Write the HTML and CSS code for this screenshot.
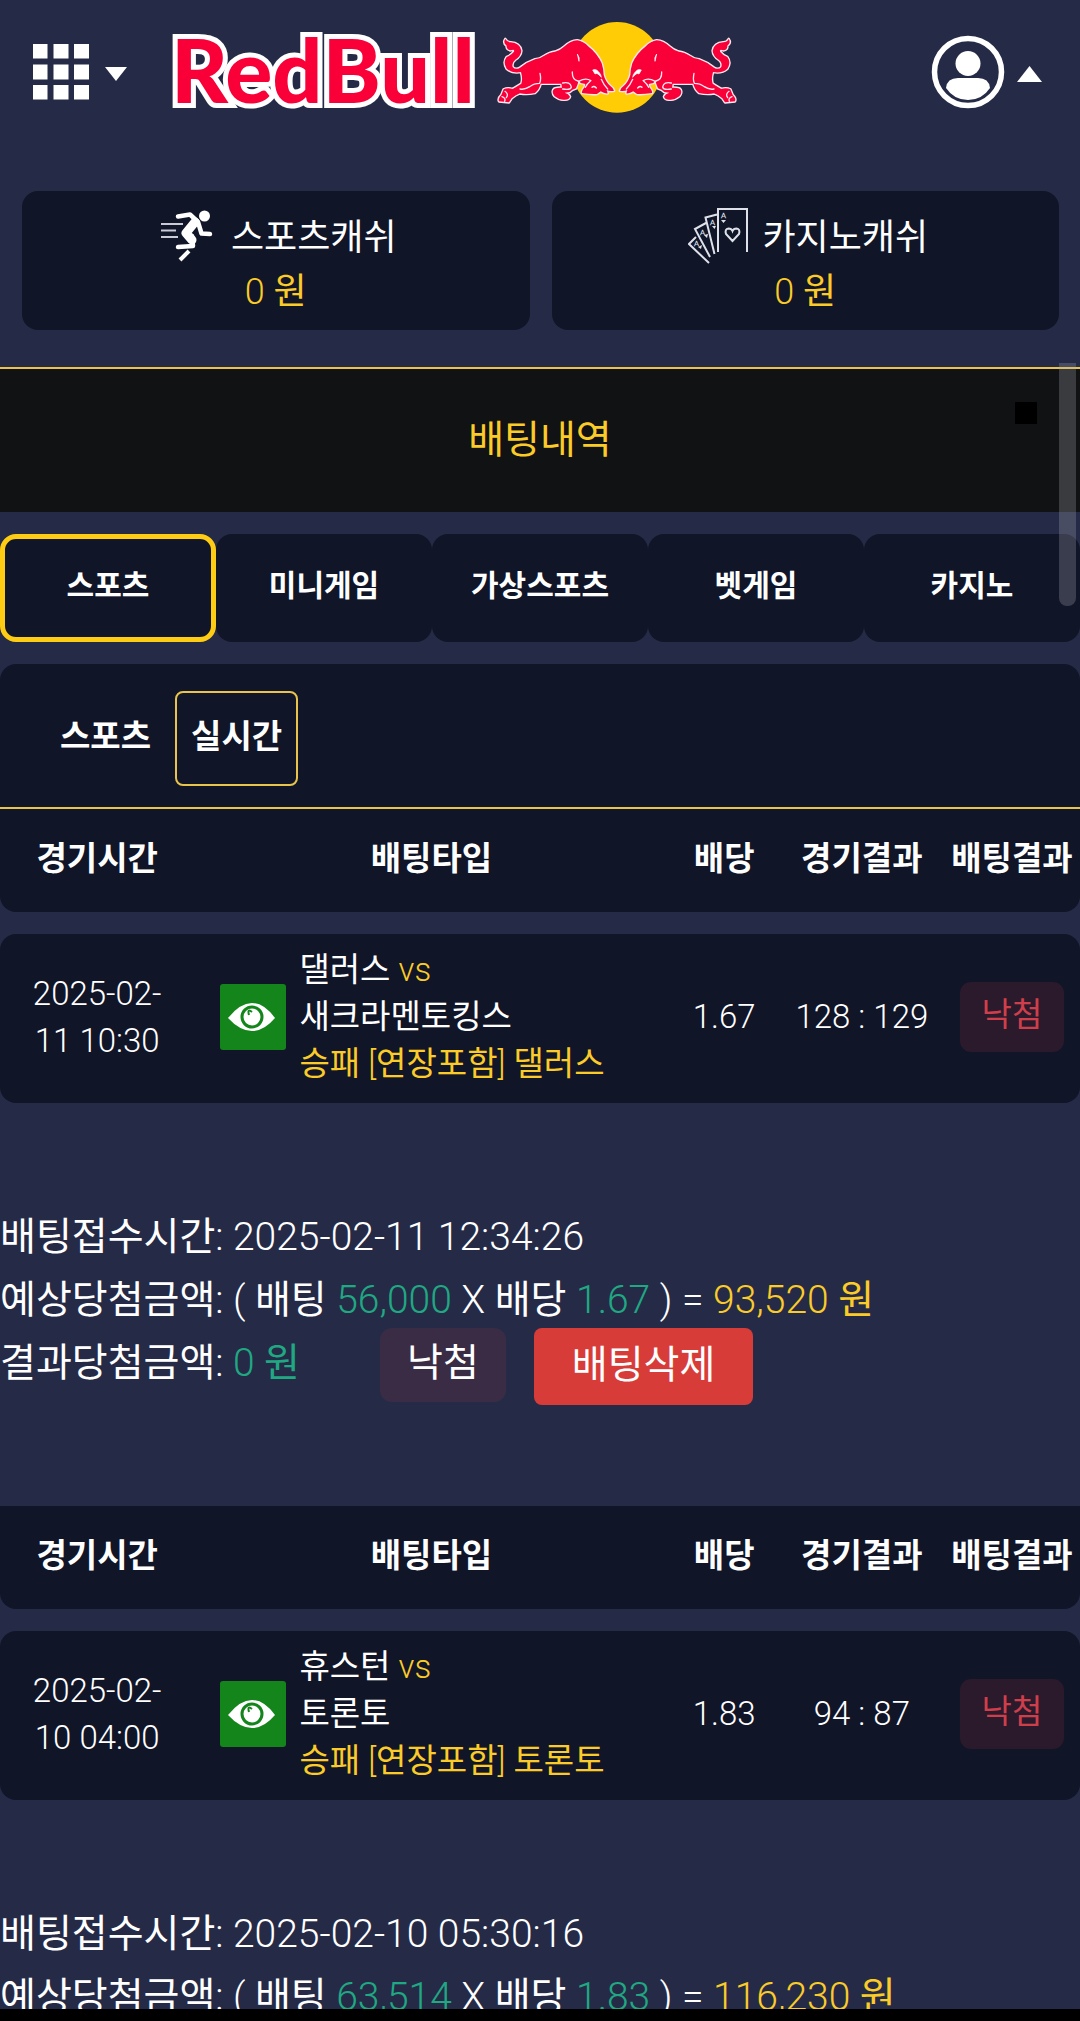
FILE: index.html
```html
<!DOCTYPE html>
<html lang="ko">
<head>
<meta charset="utf-8">
<meta name="viewport" content="width=device-width, initial-scale=1">
<title>배팅내역</title>
<link rel="stylesheet" href="styles.css">
</head>
<body>
<svg class="defs" aria-hidden="true">
  <symbol id="eye" viewBox="0 0 66 66">
    <path d="M8 34Q20 19 32 19Q44 19 55 34Q44 47 32 47Q20 47 8 34Z" fill="#fff"/>
    <circle cx="32" cy="33" r="10" fill="none" stroke="#14851b" stroke-width="3"/>
    <path d="M32 28Q27 24 29 31" fill="none" stroke="#14851b" stroke-width="2"/>
  </symbol>
  <symbol id="bull" viewBox="0 0 390 330" overflow="visible">
    <path d="M46 87Q51 97 62 97Q90 99 94 122Q93 138 76 149Q64 158 68 171Q76 181 90 173Q112 156 135 148Q150 147 160 139Q180 126 195 125Q212 120 222 110Q242 92 262 91Q279 93 296 110Q322 130 335 160Q340 175 341 195Q347 216 361 228Q371 235 372 242Q361 245 350 240L353 250Q343 251 332 244L321 252Q300 253 276 249Q274 243 284 231L286 222L272 219L266 211Q264 222 258 235Q246 238 239 246L224 248Q236 251 240 260Q237 270 222 269Q207 270 194 259Q185 248 190 239Q193 232 216 233L214 221Q180 221 152 221Q148 238 135 249Q110 254 90 250Q78 254 65 265L57 277L27 274Q23 265 34 255L41 238Q53 232 68 237Q78 231 94 221Q99 208 93 186Q66 191 50 176Q38 157 50 141Q63 136 72 125Q75 116 62 121Q49 119 50 107Q38 98 46 87Z" fill="#f90039" stroke="#ffe9f0" stroke-width="8" stroke-linejoin="round" paint-order="stroke"/>
    <path d="M262 132Q270 143 267 154Z" fill="#fff" stroke="#fff" stroke-width="2"/>
    <path d="M315 192L308 180Q320 174 332 194L334 202Q321 186 315 192Z" fill="#fff" stroke="#fff" stroke-width="2"/>
    <path d="M150 190Q154 208 149 220M247 186Q246 209 264 213M149 220Q132 220 119 230Q104 240 90 237M218 219Q241 214 244 231Q242 241 218 237M266 214Q288 202 302 212Q290 222 286 232M45 244Q57 253 49 263M36 260Q48 264 44 274M306 232Q312 226 319 234M334 208Q342 227 353 237" fill="none" stroke="#ffe9f0" stroke-width="4" stroke-linecap="round"/>
  </symbol>
</svg>

<div class="app">
  <header class="topbar">
    <button class="icon-button" type="button" aria-label="메뉴">
      <svg width="56" height="56" viewBox="0 0 56 56" fill="#fff">
        <path d="M0 0h14.500v14.500H0zM20.500 0h15v14.500h-15zM41 0h15v14.500H41zM0 20.500h14.500v15H0zM20.500 20.500h15v15h-15zM41 20.500h15v15H41zM0 41h14.500v14.500H0zM20.500 41h15v14.500h-15zM41 41h15v14.500H41z"/>
      </svg>
      <svg width="22" height="18" viewBox="0 0 22 18" fill="#fff"><path d="M0 4h22L11 18z"/></svg>
    </button>
    <a class="logo" href="#" aria-label="Red Bull">
      <span class="wordmark"><span>Red</span><span>Bull</span></span>
      <svg class="bulls" viewBox="0 0 780 330">
        <circle cx="381" cy="172" r="136" fill="#ffcc05"/>
        <use href="#bull" width="390" height="330"/>
        <use href="#bull" width="390" height="330" transform="translate(762 0) scale(-1 1)"/>
      </svg>
    </a>
    <button class="icon-button account" type="button" aria-label="내 계정">
      <svg width="74" height="74" viewBox="0 0 74 74" fill="#fff">
        <circle cx="37" cy="37" r="33.500" fill="none" stroke="#fff" stroke-width="5.500"/>
        <circle cx="37" cy="28.500" r="12.500"/>
        <path d="M15 53Q16 43 27 43H47Q58 43 59 53Q51 65 37 65Q23 65 15 53Z"/>
      </svg>
      <svg width="25" height="20" viewBox="0 0 25 20" fill="#fff"><path d="M0 20h25L12.500 4z"/></svg>
    </button>
  </header>

  <section class="wallets">
    <div class="wallet">
      <div class="wallet-name">
        <svg class="icon-run" viewBox="0 0 52 52" fill="none" stroke="#fff" stroke-linecap="round" stroke-linejoin="round">
          <path d="M0 14h22M0 20.500h15M0 27h17" stroke-width="2" stroke-linecap="butt" stroke="#c9cbd6"/>
          <circle cx="43.500" cy="6" r="5.500" fill="#fff" stroke="none"/>
          <path d="M17 6.500L29 4.500L37 12L40.500 23.500L49 24" stroke-width="4.500"/>
          <path d="M34 12L25 23L31 30" stroke-width="9"/>
          <path d="M31 26L32 36L17 37" stroke-width="4.500"/>
          <path d="M28 41L19 50" stroke-width="4" stroke-linecap="butt"/>
        </svg>
        <span>스포츠캐쉬</span>
      </div>
      <div class="wallet-amount">0 원</div>
    </div>
    <div class="wallet">
      <div class="wallet-name">
        <svg class="icon-cards" viewBox="0 0 60 56" fill="none" stroke="#dfe1ea" stroke-width="2">
          <path d="M30 44V1H59V44M26.500 46L17.500 9.500L29 6.500M22 49L7 21L18 15M21 55L1 36L8 29"/>
          <path d="M44.500 33L38 26Q36.500 21 40.500 20.500Q43.500 20.500 44.500 23Q45.500 20.500 48.500 20.500Q52.500 21 51 26Z"/>
          <g fill="#dfe1ea" stroke="none">
            <path d="M33 12h5l-2.500 3zM24 18l4 0-1.500 3zM16 27l4-1-1 4zM10 39l4-2-1 4z"/>
            <text class="pip" x="33" y="10">A</text>
            <text class="pip" x="22" y="17">A</text>
            <text class="pip" x="12" y="27">A</text>
            <text class="pip" x="6" y="38">A</text>
          </g>
        </svg>
        <span>카지노캐쉬</span>
      </div>
      <div class="wallet-amount">0 원</div>
    </div>
  </section>

  <main class="sheet">
    <div class="scroller">
      <div class="title-bar">
        <h1>배팅내역</h1>
        <button class="close" type="button" aria-label="닫기"></button>
      </div>

      <nav class="tabs">
        <button class="tab active" type="button">스포츠</button>
        <button class="tab" type="button">미니게임</button>
        <button class="tab" type="button">가상스포츠</button>
        <button class="tab" type="button">벳게임</button>
        <button class="tab" type="button">카지노</button>
      </nav>

      <nav class="subtabs">
        <button class="subtab" type="button">스포츠</button>
        <button class="subtab active" type="button">실시간</button>
      </nav>

      <article class="bet">
        <table class="bet-table">
          <thead>
            <tr><th>경기시간</th><th>배팅타입</th><th>배당</th><th>경기결과</th><th>배팅결과</th></tr>
          </thead>
          <tbody>
            <tr>
              <td>2025-02-<br>11 10:30</td>
              <td class="pick">
                <button class="eye" type="button" aria-label="보기"><svg><use href="#eye"/></svg></button>
                <div>댈러스 <span class="gold">vs</span><br>새크라멘토킹스<br><span class="gold">승패 [연장포함] 댈러스</span></div>
              </td>
              <td>1.67</td>
              <td>128 : 129</td>
              <td><span class="lost">낙첨</span></td>
            </tr>
          </tbody>
        </table>
        <div class="summary">
          <p>배팅접수시간: 2025-02-11 12:34:26</p>
          <p>예상당첨금액: ( 배팅 <span class="green">56,000</span> X 배당 <span class="green">1.67</span> ) = <span class="gold">93,520 원</span></p>
          <div class="outcome">
            <p>결과당첨금액: <span class="green">0 원</span></p>
            <span class="state">낙첨</span>
            <button class="delete" type="button">배팅삭제</button>
          </div>
        </div>
      </article>

      <article class="bet">
        <table class="bet-table">
          <thead>
            <tr><th>경기시간</th><th>배팅타입</th><th>배당</th><th>경기결과</th><th>배팅결과</th></tr>
          </thead>
          <tbody>
            <tr>
              <td>2025-02-<br>10 04:00</td>
              <td class="pick">
                <button class="eye" type="button" aria-label="보기"><svg><use href="#eye"/></svg></button>
                <div>휴스턴 <span class="gold">vs</span><br>토론토<br><span class="gold">승패 [연장포함] 토론토</span></div>
              </td>
              <td>1.83</td>
              <td>94 : 87</td>
              <td><span class="lost">낙첨</span></td>
            </tr>
          </tbody>
        </table>
        <div class="summary">
          <p>배팅접수시간: 2025-02-10 05:30:16</p>
          <p>예상당첨금액: ( 배팅 <span class="green">63,514</span> X 배당 <span class="green">1.83</span> ) = <span class="gold">116,230 원</span></p>
        </div>
      </article>
    </div>
    <div class="scroll-thumb"></div>
  </main>
</div>
</body>
</html>
```
FILE: styles.css
```css
:root {
  --bg: #252b47;
  --panel: #111528;
  --gold: #fbcb28;
  --green: #20a883;
}

* {
  box-sizing: border-box;
}

body {
  margin: 0;
  background: #000;
  color: #fff;
  font-family: "Roboto Light", Roboto, "Noto Sans CJK KR", sans-serif;
  font-weight: 400;
  font-size: 33px;
  line-height: 47px;
}

h1,
p {
  margin: 0;
  font-weight: inherit;
}

button {
  margin: 0;
  padding: 0;
  border: 0;
  background: none;
  color: inherit;
  font: inherit;
  cursor: pointer;
}

.defs {
  display: none;
}

.gold {
  color: var(--gold);
}

.green {
  color: var(--green);
}

.app {
  display: flex;
  flex-direction: column;
  height: 100vh;
  border-bottom: 12px solid #000;
  background: var(--bg);
  overflow: hidden;
}

/* Top bar */
.topbar {
  display: flex;
  align-items: center;
  height: 144px;
  padding: 0 38px 0 33px;
}

.icon-button {
  display: flex;
  align-items: center;
  gap: 16px;
}

.account {
  gap: 12px;
  margin-left: auto;
}

.logo {
  display: flex;
  align-items: center;
  gap: 15px;
  margin-left: 44px;
  padding-bottom: 14px;
  text-decoration: none;
}

.wordmark {
  display: flex;
  padding-top: 8px;
  color: #f90039;
  font-family: Lato, sans-serif;
  font-size: 88px;
  font-weight: 900;
  line-height: 88px;
  -webkit-text-stroke: 10px #fff;
  paint-order: stroke fill;
}

.bulls {
  width: 260px;
  height: 110px;
}

/* Wallet cards */
.wallets {
  display: grid;
  grid-template-columns: 1fr 1fr;
  gap: 22px;
  padding: 47px 21px 33px 22px;
}

.wallet {
  padding: 17px 0 10px;
  border-radius: 16px;
  background: var(--panel);
  font-size: 36px;
  line-height: 56px;
  text-align: center;
}

.wallet-name {
  display: flex;
  align-items: center;
  justify-content: center;
  gap: 14px;
  padding-left: 6px;
}

.wallet-name span {
  padding-top: 4px;
  line-height: 52px;
}

.wallet-amount {
  color: var(--gold);
}

.icon-run {
  width: 52px;
  height: 52px;
  margin-right: 4px;
}

.icon-cards {
  width: 60px;
  height: 56px;
}

.pip {
  font-size: 8px;
  font-weight: 700;
}

/* Bet history sheet */
.sheet {
  position: relative;
  flex: 1;
  min-height: 0;
}

.scroller {
  height: 100%;
  padding-top: 4px;
  overflow-y: auto;
  scrollbar-width: none;
}

.scroll-thumb {
  position: absolute;
  top: 0;
  right: 4px;
  width: 17px;
  height: 243px;
  border-radius: 0 0 8px 8px;
  background: rgba(170, 170, 180, 0.27);
}

.title-bar {
  position: relative;
  padding: 40px 0;
  border-top: 2px solid #e8c44c;
  background: #111214;
  text-align: center;
}

.title-bar h1 {
  color: var(--gold);
  font-size: 39px;
  line-height: 63px;
}

.close {
  position: absolute;
  top: 33px;
  right: 43px;
  width: 22px;
  height: 22px;
  background: #000;
}

.tabs {
  display: grid;
  grid-template-columns: repeat(5, 1fr);
  margin: 22px 0;
}

.tab {
  height: 108px;
  padding-bottom: 6px;
  border-radius: 16px;
  background: var(--panel);
  font-size: 30px;
  font-weight: 700;
}

.tab.active {
  border: 5px solid #ffcc14;
}

.subtabs {
  display: flex;
  padding: 27px 44px 21px;
  border-bottom: 2px solid #e8c44c;
  border-radius: 16px 16px 0 0;
  background: var(--panel);
}

.subtab {
  height: 95px;
  padding: 0 14px 4px;
  border: 2px solid transparent;
  border-radius: 8px;
  font-weight: 700;
}

.subtab.active {
  border-color: #e8c44c;
  margin-left: 8px;
}

/* Bets */
.bet-table,
.bet-table thead,
.bet-table tbody {
  display: block;
}

.bet-table tr {
  display: grid;
  grid-template-columns: 180fr 439fr 103fr 152fr 126fr;
  align-items: center;
  background: var(--panel);
  text-align: center;
}

.bet-table thead tr {
  padding: 26px 0 30px;
  border-radius: 0 0 16px 16px;
}

.bet-table tbody tr {
  margin-top: 22px;
  padding: 12px 0 16px;
  border-radius: 16px;
}

.bet-table th,
.bet-table td {
  padding: 0;
}

.bet-table th {
  font-weight: 700;
  white-space: nowrap;
}

.bet-table .pick {
  display: flex;
  align-items: center;
  gap: 13px;
  padding-left: 26px;
  text-align: left;
}

.eye {
  flex: none;
  width: 66px;
  height: 66px;
  border-radius: 3px;
  background: #14851b;
}

.eye svg {
  display: block;
  width: 66px;
  height: 66px;
}

.lost {
  display: inline-block;
  padding: 9px 22px 14px;
  border-radius: 11px;
  background: #2a1a2c;
  color: #cf3e4b;
}

.summary {
  padding: 103px 0 101px;
  font-size: 39px;
  line-height: 63px;
}

.outcome {
  display: flex;
  align-items: flex-start;
  margin-top: -4px;
}

.outcome p {
  padding-top: 4px;
}

.state {
  margin-left: 80px;
  padding: 4px 27px 7px;
  border-radius: 12px;
  background: #3b2c46;
}

.delete {
  margin-left: 28px;
  padding: 6px 38px 8px;
  border-radius: 8px;
  background: #d83c38;
}
```
